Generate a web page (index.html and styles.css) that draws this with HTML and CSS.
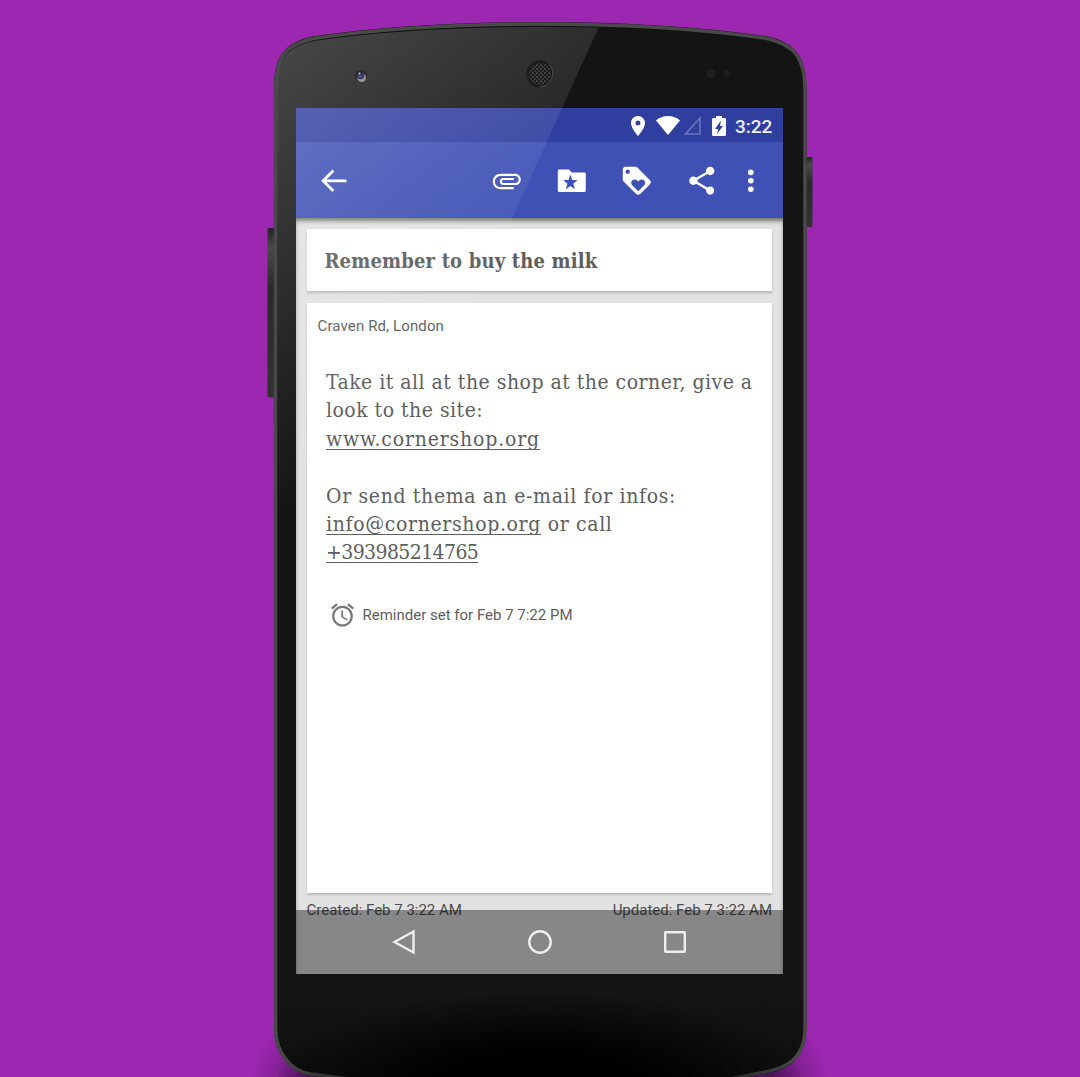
FILE: index.html
```html
<!DOCTYPE html>
<html lang="en">
<head>
<meta charset="utf-8">
<title>Note</title>
<link rel="stylesheet" href="styles.css">
</head>
<body>
<div class="stage">
  <svg class="device" viewBox="0 0 1080 1077" aria-hidden="true">
    <defs>
      <linearGradient id="body" x1="0" y1="0" x2="0" y2="1"><stop offset="0" stop-color="#141414"/><stop offset=".91" stop-color="#151515"/><stop offset="1" stop-color="#0e0e0e"/></linearGradient>
      <radialGradient id="foot" cx="540" cy="1085" r="1" gradientUnits="userSpaceOnUse" gradientTransform="translate(540 1085) scale(270 95) translate(-540 -1085)"><stop offset="0" stop-color="#000"/><stop offset=".35" stop-color="#000"/><stop offset="1" stop-color="#000" stop-opacity="0"/></radialGradient>
      <linearGradient id="btn" x1="0" y1="0" x2="0" y2="1"><stop offset="0" stop-color="#222"/><stop offset=".12" stop-color="#4a4a4a"/><stop offset=".35" stop-color="#292929"/><stop offset="1" stop-color="#333"/></linearGradient>
      <radialGradient id="shade"><stop offset="0" stop-color="#3c1048" stop-opacity=".75"/><stop offset=".6" stop-color="#3c1048" stop-opacity=".25"/><stop offset="1" stop-color="#3c1048" stop-opacity="0"/></radialGradient>
      <pattern id="mesh" width="4" height="4" patternUnits="userSpaceOnUse"><circle cx="1" cy="1" r=".85" fill="#666"/><circle cx="3" cy="3" r=".85" fill="#555"/></pattern>
    </defs>
    <ellipse cx="312" cy="1092" rx="62" ry="80" fill="url(#shade)"/>
    <ellipse cx="768" cy="1092" rx="62" ry="80" fill="url(#shade)"/>
    <rect x="267.5" y="228" width="8" height="169.500" rx="1.500" fill="url(#btn)"/>
    <rect x="804" y="157" width="8.500" height="70" rx="1.500" fill="url(#btn)"/>
    <path d="M274 88C274 57 284 43 312 36.500Q410 22 540 22T768 36.500C796 43 806 57 806.500 88V1028C806.500 1061 786 1071 760 1075L730 1080H350L310 1076C291 1072 274 1055 274 1028Z" fill="url(#body)"/>
    <path d="M275.500 88C275.500 58 285 45 313 38.500Q410 24 540 24T767 38.500C795 45 804.500 58 805 88V1028C805 1060 785 1069 760 1073L730 1079H350L310 1074C292 1071 275.500 1054 275.500 1028Z" fill="none" stroke="#494949" stroke-width="3.500"/>
    <rect x="278" y="974" width="524" height="103" fill="url(#foot)"/>
    <circle cx="711" cy="73.500" r="5" fill="#1e1e1e"/><circle cx="727" cy="73.500" r="3" fill="#202020"/>
  </svg>

  <main class="screen">
    <header class="status">
      <svg class="pin" viewBox="5 2 14 20"><path d="M12 2C8.100 2 5 5.100 5 9c0 5.300 7 13 7 13s7-7.700 7-13c0-3.900-3.100-7-7-7zm0 9.500a2.500 2.500 0 1 1 0-5 2.500 2.500 0 0 1 0 5z"/></svg>
      <svg class="wifi" viewBox="0 0 24 19"><path d="M12 19 0 4.500C3 1.500 7.500 0 12 0s9 1.500 12 4.500z"/></svg>
      <svg class="cell" viewBox="0 0 18 19"><path d="M2.500 18H17V2z"/></svg>
      <svg class="battery" viewBox="5 2 14 20"><path d="M17.500 4H15V2H9v2H6.500Q5 4 5 5.500v15Q5 22 6.500 22h11q1.500 0 1.500-1.500v-15Q19 4 17.500 4zM10 20l1.200-5H8l6-8.500-1 5.500h3z"/></svg>
      <span class="clock">3:22</span>
    </header>

    <nav class="toolbar">
      <svg class="icon" viewBox="0 0 24 24"><path d="M21 11H6.800l5.600-5.600L11 4l-8 8 8 8 1.400-1.400L6.800 13H21z"/></svg>
      <div class="actions">
        <svg class="icon" viewBox="0 0 24 24"><path d="M7.500 18C4.460 18 2 15.540 2 12.500S4.460 7 7.500 7H18c2.210 0 4 1.790 4 4s-1.790 4-4 4H9.500C8.120 15 7 13.880 7 12.500S8.120 10 9.500 10H17v1.500H9.500c-.55 0-1 .45-1 1s.45 1 1 1H18c1.380 0 2.500-1.120 2.500-2.500S19.380 8.500 18 8.500H7.500c-2.210 0-4 1.790-4 4s1.790 4 4 4H17V18H7.500z"/></svg>
        <svg class="icon" viewBox="0 0 24 24"><path fill-rule="evenodd" d="M21 6h-9l-2-2H3C2.300 4 2 4.400 2 5v14c0 .6.4 1 1 1h18c.6 0 1-.4 1-1V7c0-.6-.4-1-1-1zm-6.800 12L11 15.800 7.800 18l1.100-3.900-3-2.600 3.800-.1L11 7.500l1.300 3.900 3.800.1-3 2.600z"/></svg>
        <svg class="icon" viewBox="0 0 24 24"><path d="M21.410 11.580l-9-9C12.050 2.220 11.550 2 11 2H4c-1.100 0-2 .9-2 2v7c0 .55.22 1.050.59 1.420l9 9c.36.36.86.58 1.410.58.55 0 1.050-.22 1.410-.59l7-7c.37-.36.59-.86.59-1.410 0-.55-.23-1.060-.59-1.420zM5.500 7C4.670 7 4 6.330 4 5.500S4.670 4 5.500 4 7 4.670 7 5.500 6.330 7 5.500 7zm11.770 8.270L13 19.540l-4.270-4.270C8.280 14.810 8 14.190 8 13.500c0-1.380 1.120-2.500 2.500-2.500.69 0 1.320.28 1.770.74l.73.72.73-.73c.45-.45 1.080-.73 1.770-.73 1.380 0 2.500 1.120 2.500 2.500 0 .69-.28 1.320-.73 1.770z"/></svg>
        <svg class="icon" viewBox="0 0 24 24"><path d="M18 16.080c-.76 0-1.440.3-1.960.77L8.910 12.700c.05-.23.09-.46.09-.7s-.04-.47-.09-.7l7.050-4.110c.54.5 1.250.81 2.040.81 1.660 0 3-1.340 3-3s-1.340-3-3-3-3 1.340-3 3c0 .24.04.47.09.7L8.040 9.810C7.500 9.310 6.790 9 6 9c-1.660 0-3 1.340-3 3s1.340 3 3 3c.79 0 1.500-.31 2.040-.81l7.120 4.160c-.05.21-.08.43-.08.65 0 1.610 1.310 2.920 2.920 2.920s2.920-1.310 2.920-2.920-1.310-2.920-2.920-2.920z"/></svg>
        <svg class="icon more" viewBox="0 0 24 24"><circle cx="12" cy="6" r="2"/><circle cx="12" cy="12" r="2"/><circle cx="12" cy="18" r="2"/></svg>
      </div>
    </nav>

    <section class="content">
      <h1 class="card title">Remember to buy the milk</h1>
      <article class="card note">
        <p class="place">Craven Rd, London</p>
        <div class="text">
          <p>Take it all at the shop at the corner, give a</p>
          <p>look to the site:</p>
          <p class="loose"><a>www.cornershop.org</a></p>
          <p>&nbsp;</p>
          <p class="medium">Or send thema an e-mail for infos:</p>
          <p class="medium"><a>info@cornershop.org</a> or call</p>
          <p class="tight"><a>+393985214765</a></p>
        </div>
        <div class="reminder">
          <svg class="alarm" viewBox="2 2 20 20"><path d="M22 5.720l-4.600-3.860-1.290 1.530 4.600 3.860L22 5.720zM7.880 3.390L6.600 1.860 2 5.710l1.290 1.530 4.590-3.850zM12.500 8H11v6l4.750 2.850.75-1.230-4-2.370V8zM12 4c-4.970 0-9 4.030-9 9s4.020 9 9 9c4.970 0 9-4.030 9-9s-4.030-9-9-9zm0 16c-3.870 0-7-3.130-7-7s3.130-7 7-7 7 3.130 7 7-3.130 7-7 7z"/></svg>
          <span>Reminder set for Feb 7 7:22 PM</span>
        </div>
      </article>
      <footer class="dates"><span>Created: Feb 7 3:22 AM</span><span>Updated: Feb 7 3:22 AM</span></footer>
    </section>

    <div class="navbar">
      <svg viewBox="0 0 28 28"><path d="M4.500 14 23.500 3.500v21z"/></svg>
      <svg viewBox="0 0 28 28"><circle cx="14" cy="14" r="10.700"/></svg>
      <svg viewBox="0 0 28 28"><rect x="4.200" y="4.200" width="19.600" height="19.600" rx=".5"/></svg>
    </div>
  </main>

  <svg class="device" viewBox="0 0 1080 1077" aria-hidden="true">
    <defs><linearGradient id="glare" gradientUnits="userSpaceOnUse" x1="276" y1="60" x2="500" y2="350"><stop offset="0" stop-color="#fff" stop-opacity=".21"/><stop offset="1" stop-color="#fff" stop-opacity="0"/></linearGradient></defs>
    <path d="M277 88C277 60 286 47 314 41Q410 27 540 27L598.500 27.500 278 736Z" fill="url(#glare)"/>
    <circle cx="361" cy="76" r="6" fill="#292929"/><circle cx="361.500" cy="77.500" r="4.500" fill="#999"/><circle cx="360.500" cy="75.500" r="3.800" fill="#34374d"/><ellipse cx="360.500" cy="76.500" rx="2.500" ry="1.200" fill="#4a52b5"/><circle cx="359.500" cy="73.500" r=".9" fill="#ccc"/>
    <circle cx="540" cy="74" r="13.500" fill="#1b1b1b"/><path d="M549 64.500a13.300 13.300 0 0 1-9 22.500" fill="none" stroke="#555" stroke-width="1"/><circle cx="540" cy="74" r="11" fill="url(#mesh)"/>
  </svg>
</div>
</body>
</html>
```
FILE: styles.css
```css
* { box-sizing: border-box; }
body { margin: 0; font-family: Roboto, "Liberation Sans", sans-serif; }
h1, p { margin: 0; }
.stage { position: relative; width: 1080px; height: 1077px; overflow: hidden; background: #9c27b0; padding: 108px 0 0 296px; }
.device { position: absolute; left: 0; top: 0; width: 1080px; height: 1077px; }
.device:last-child { z-index: 2; }
.screen { position: relative; z-index: 1; width: 487px; height: 866px; display: flex; flex-direction: column; background: #e2e2e2; overflow: hidden; }
.status { height: 34px; flex: none; background: #303f9f; display: flex; align-items: center; justify-content: flex-end; padding: 1px 11px 0 0; }
.status svg, .icon { fill: #fff; }
.pin { width: 14px; height: 20px; margin-right: 11px; }
.wifi { width: 24px; height: 19px; margin-right: 3px; }
.status .cell { width: 18px; height: 19px; margin-right: 11px; fill: none; stroke: #6975bb; stroke-width: 1.6px; }
.battery { width: 14px; height: 20px; margin-right: 9px; }
.clock { color: #eceef9; font-size: 19px; font-weight: 500; line-height: 34px; width: 37px; padding-top: 2px; white-space: nowrap; }
.toolbar { height: 76px; flex: none; background: #3f51b5; display: flex; align-items: center; justify-content: space-between; padding: 1px 16px 0 21px; }
.icon { width: 33.600px; height: 33.600px; display: block; }
.actions { display: flex; gap: 31.400px; }
.more { margin-left: -16px; margin-right: -.5px; }
.content { flex: 1; padding: 11px 11px 0 10.500px; display: flex; flex-direction: column; color: #5e5e5e; box-shadow: inset 0 4px 4px -1px rgba(0,0,0,.5); }
.card { background: #fff; box-shadow: 0 2px 2px rgba(0,0,0,.18); }
.title { height: 62px; flex: none; padding: 18px 0 0 18px; font: 700 20px/28px "Roboto Slab", "DejaVu Serif Condensed", "DejaVu Serif", serif; letter-spacing: .16px; }
.note { height: 590px; flex: none; margin-top: 12px; }
.place { padding: 13px 11px 0; height: 65px; font-size: 15px; line-height: 20px; letter-spacing: .13px; }
.text { padding: 0 19.500px; font: 21px/28.400px "Roboto Slab", "DejaVu Serif Condensed", "DejaVu Serif", serif; letter-spacing: .48px; white-space: nowrap; }
.text .medium { letter-spacing: .65px; }
.text .loose { letter-spacing: .82px; }
.text .tight { letter-spacing: -.6px; }
.text a { text-decoration: underline; text-decoration-thickness: 1.400px; text-underline-offset: 3px; text-decoration-skip-ink: none; }
.reminder { display: flex; align-items: center; gap: 9px; margin: 36px 0 0 24px; font-size: 15px; line-height: 24px; }
.alarm { width: 23px; height: 24px; fill: #777; overflow: visible; }
.dates { display: flex; justify-content: space-between; font-size: 15px; line-height: 20px; margin-top: 7px; color: #4f4f4f; }
.navbar { position: absolute; left: 0; right: 0; bottom: 0; height: 64.500px; display: flex; justify-content: center; align-items: center; gap: 107.500px; background: rgba(0,0,0,.4); }
.navbar svg { width: 28px; height: 28px; fill: none; stroke: #eee; stroke-width: 2.400px; }
```
